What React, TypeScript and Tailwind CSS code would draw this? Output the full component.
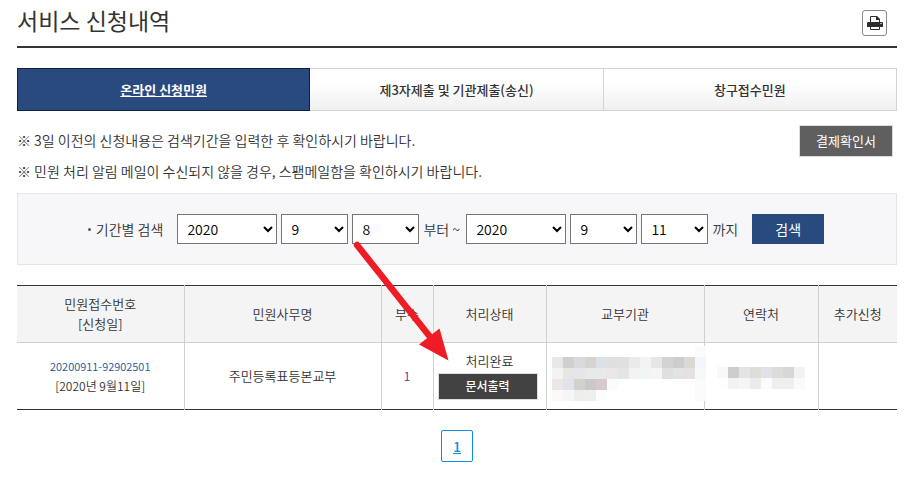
const years = ["2018", "2019", "2020"];
const months = ["7", "8", "9", "10", "11", "12"];
const days = ["7", "8", "9", "10", "11", "12"];

const tabs = [
  { label: "온라인 신청민원", active: true },
  { label: "제3자제출 및 기관제출(송신)", active: false },
  { label: "창구접수민원", active: false },
];

const agencyCells = [
  ["", "", "", "", "", "", "", "", "", "", "", "", "", "#fbfbfb"],
  ["#e8e7e6", "#cfcfd0", "#dadade", "#d5d4d2", "#dce1e5", "#dedfe0", "#e0e0df", "#e9eaec", "#f3f3f2", "#e6e6e4", "#d3d3d1", "#cdcdce", "#dcd9d3", "#f3f7fb"],
  ["#f3f3f1", "#e6e6e4", "#e5e6ea", "#e9e9e8", "#e9e9ea", "#e9e6e5", "#e5e5e5", "#f1f3f4", "#f2f5f5", "#f5f5f4", "#dfdfde", "#e3e3e5", "#e5e1e1", "#f6f9fc"],
  ["#ece7e4", "#e2e3e8", "#d1d1cf", "#c8c9c8", "#d6cacf", "#f7fcfe", "", "", "", "", "", "", "", "#fbfbfb"],
  ["#f9f9f7", "#f5f6f6", "#eeeeed", "#efefee", "#fcfcfc", "", "", "", "", "", "", "", "", "#fbfbfb"],
];

const contactCells = [
  ["#f8f8f6", "#cdcdcf", "#e3e5e4", "#e0dcd7", "#e2e1e8", "#dcdbdd", "#d6d7d7", "#f1f2f2"],
  ["#fefefc", "#f2f2f3", "#f5f5f6", "#ebebec", "#fbfbfc", "#eeeeee", "#efefef", "#fafafa"],
];

const Mosaic = ({ cells, className }: { cells: string[][]; className: string }) => (
  <svg
    className={className}
    width={cells[0].length * 11}
    height={cells.length * 11}
    shapeRendering="crispEdges"
    aria-hidden="true"
  >
    {cells.map((row, y) =>
      row.map((fill, x) =>
        fill ? <rect key={`${x}-${y}`} x={x * 11} y={y * 11} width="11" height="11" fill={fill} /> : null
      )
    )}
  </svg>
);

const PrintIcon = () => (
  <svg width="16" height="16" viewBox="0 0 16 16" aria-hidden="true">
    <path d="M3.5 8V1.500h6l3 3V8" fill="#fff" stroke="#2e2e2e" />
    <path d="M9 1v4h4V4L10 1z" fill="#2e2e2e" />
    <path d="M0 8q0-1 1-1h14q1 0 1 1v4H0z" fill="#2e2e2e" />
    <path d="M13 8h2v1h-2z" fill="#aaa" />
    <path d="M3.500 11.500h9v3h-9z" fill="#fff" stroke="#2e2e2e" />
  </svg>
);

type DateSelectProps = {
  label: string;
  value: string;
  options: string[];
  wide?: boolean;
};

const DateSelect = ({ label, value, options, wide }: DateSelectProps) => (
  <select
    aria-label={label}
    defaultValue={value}
    className={`h-[30px] border border-[#767676] bg-white px-[5px] text-sm text-black ${wide ? "w-[100px]" : "w-[67px]"}`}
  >
    {options.map((option) => (
      <option key={option}>{option}</option>
    ))}
  </select>
);

const App = () => {
  return (
    <main className="relative bg-white pr-4 pl-[17px] font-['Noto_Sans_CJK_KR',sans-serif] font-[350] text-[#333]">
      <header className="flex h-12 items-start justify-between border-b-2 border-[#333]">
        <h1 className="text-[23px] leading-10 font-normal">서비스 신청내역</h1>
        <button
          type="button"
          aria-label="인쇄"
          className="mt-[10px] mr-[10px] flex h-[26px] w-[25px] items-center justify-center rounded-[3px] border border-[#888]"
        >
          <PrintIcon />
        </button>
      </header>

      <nav className="mt-5 grid grid-cols-3">
        {tabs.map((tab) => (
          <a
            key={tab.label}
            href="#"
            className={
              tab.active
                ? "flex h-[43px] items-center justify-center border border-[#0c2340] bg-[#294a7f] text-[13px] font-bold text-white underline"
                : "flex h-[43px] items-center justify-center border border-l-0 border-[#d3d3d3] bg-linear-to-b from-white from-30% to-[#f0f0f0] text-[13px] font-medium"
            }
          >
            {tab.label}
          </a>
        ))}
      </nav>

      <div className="mt-[14px] flex items-start justify-between pr-1">
        <div className="text-sm leading-[31px]">
          <p>※ 3일 이전의 신청내용은 검색기간을 입력한 후 확인하시기 바랍니다.</p>
          <p>※ 민원 처리 알림 메일이 수신되지 않을 경우, 스팸메일함을 확인하시기 바랍니다.</p>
        </div>
        <button
          type="button"
          className="h-8 w-[94px] border border-[#ddd] bg-[#5f5f5f] text-[13px] font-normal text-white"
        >
          결제확인서
        </button>
      </div>

      <form className="mt-[6px] flex h-[72px] items-center justify-center gap-1 border border-[#e5e5ec] bg-[#f7f7fa] pr-[2px] text-sm">
        <span className="mr-[10px] flex items-center gap-[5px]">
          <span className="size-[3px] rounded-full bg-[#555]" />
          기간별 검색
        </span>
        <DateSelect label="시작 연도" value="2020" options={years} wide />
        <DateSelect label="시작 월" value="9" options={months} />
        <DateSelect label="시작 일" value="8" options={days} />
        <span className="w-[39px] whitespace-nowrap">부터 ~</span>
        <DateSelect label="종료 연도" value="2020" options={years} wide />
        <DateSelect label="종료 월" value="9" options={months} />
        <DateSelect label="종료 일" value="11" options={days} />
        <span>까지</span>
        <button type="button" className="ml-[10px] h-[30px] w-[72px] bg-[#294a7f] font-normal text-white">
          검색
        </button>
      </form>

      <table className="mt-5 w-full table-fixed border-y border-[#333] text-center text-[13px]">
        <colgroup>
          <col className="w-[167px]" />
          <col />
          <col className="w-[52px]" />
          <col className="w-[113px]" />
          <col className="w-[158px]" />
          <col className="w-[114px]" />
          <col className="w-[79px]" />
        </colgroup>
        <thead>
          <tr className="h-[57px] divide-x divide-[#d0d0d0] border-b border-[#d0d0d0] bg-[#f4f4f4] leading-5 *:font-[350]">
            <th>
              민원접수번호
              <br />
              [신청일]
            </th>
            <th>민원사무명</th>
            <th>부수</th>
            <th>처리상태</th>
            <th>교부기관</th>
            <th>연락처</th>
            <th>추가신청</th>
          </tr>
        </thead>
        <tbody>
          <tr className="h-[67px] divide-x divide-[#d0d0d0]">
            <td>
              <a href="#" className="block text-[11px] leading-[19px] text-[#1c5599]">
                20200911-92902501
              </a>
              <span className="block text-xs leading-[19px]">[2020년 9월11일]</span>
            </td>
            <td>주민등록표등본교부</td>
            <td className="text-xs text-[#7a1f7a]">1</td>
            <td className="px-1 pb-1">
              <p className="leading-6">처리완료</p>
              <button
                type="button"
                className="block h-[27px] w-[100px] border border-[#ddd] bg-[#424242] text-xs font-medium text-white"
              >
                문서출력
              </button>
            </td>
            <td className="relative">
              <Mosaic cells={agencyCells} className="absolute top-[3px] left-[5px] z-10 max-w-none" />
            </td>
            <td className="pt-1">
              <Mosaic cells={contactCells} className="mx-auto" />
            </td>
            <td />
          </tr>
        </tbody>
      </table>

      <nav className="mt-5 flex justify-center">
        <a
          href="#"
          className="flex size-8 items-center justify-center rounded-xs border border-[#0f8fe0] text-sm font-medium text-[#0f8fe0] underline"
        >
          1
        </a>
      </nav>

      {/* points at the document output button */}
      <svg
        className="pointer-events-none absolute top-[240px] left-[352px] z-20"
        width="100"
        height="124"
        viewBox="0 0 100 124"
        aria-hidden="true"
      >
        <path d="M5 5L79 98" stroke="#ee1c25" strokeWidth="6.500" strokeLinecap="round" />
        <path d="M67 104.500L87.500 88.500L96.500 120.500Z" fill="#ee1c25" />
      </svg>
    </main>
  );
};

export default App;
